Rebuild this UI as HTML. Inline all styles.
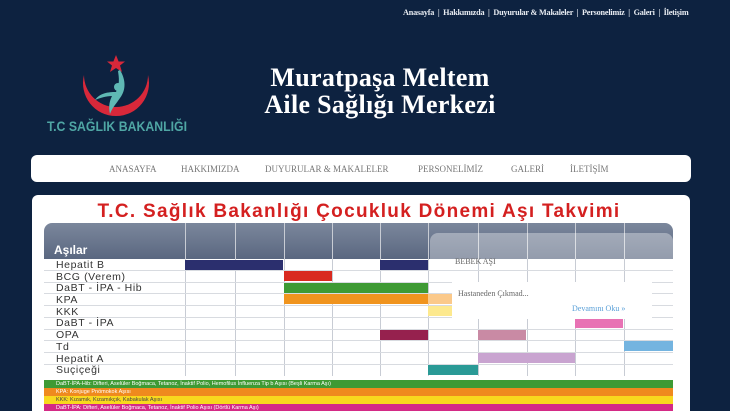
<!DOCTYPE html>
<html><head><meta charset="utf-8"><style>
*{margin:0;padding:0;box-sizing:border-box}
html,body{width:730px;height:411px;overflow:hidden}
body{background:#0d2240;font-family:"Liberation Sans",sans-serif;position:relative}
.top{position:absolute;top:8px;left:403px;width:287px;font-family:"Liberation Serif",serif;font-size:8.2px;color:#e8ecf2;white-space:nowrap;font-weight:bold;letter-spacing:-0.2px}
.title{position:absolute;left:230px;width:300px;top:64px;text-align:center;font-family:"Liberation Serif",serif;font-weight:bold;font-size:26px;line-height:27px;color:#fff;white-space:nowrap;letter-spacing:0.3px}
.nav{position:absolute;left:31px;top:155px;width:660px;height:27px;background:#fff;border-radius:6px;font-family:"Liberation Serif",serif;font-size:9px;color:#777}
.nav span{position:absolute;top:9px;white-space:nowrap}
.panel{position:absolute;left:32px;top:195px;width:658px;height:230px;background:#fff;border-radius:6px}
.h{position:absolute;left:44px;width:630px;top:201px;text-align:center;color:#d42020;font-weight:bold;font-size:19px;letter-spacing:1.3px;white-space:nowrap}
.thead{position:absolute;left:44px;top:223px;width:629px;height:36px;background:linear-gradient(#7b879c,#5a6780);border-radius:8px 8px 0 0}
.thead b{position:absolute;left:10px;bottom:2px;color:#fff;font-size:12px}
.vl{position:absolute;top:223px;width:1px;height:153px;background:#c8ccd4}
.row{position:absolute;left:44px;width:629px;height:1px;background:#d8dbe0}
.lbl{position:absolute;left:56px;font-size:10.5px;line-height:12px;color:#333;letter-spacing:0.6px}
.c{position:absolute;height:10px}
.lg{position:absolute;left:44px;width:629px;height:8px;font-size:5.5px;color:#fff;padding-left:12px;line-height:8px;white-space:nowrap;overflow:hidden}
</style></head><body>
<div class="top">Anasayfa &nbsp;| &nbsp;Hakkımızda &nbsp;| &nbsp;Duyurular &amp; Makaleler &nbsp;| &nbsp;Personelimiz &nbsp;| &nbsp;Galeri &nbsp;| &nbsp;İletişim</div>
<svg style="position:absolute;left:40px;top:52px" width="160" height="85" viewBox="0 0 160 85">
<polygon points="76,3 78.6,9.5 85,9.5 80,13.5 82,20 76,16 70,20 72,13.5 67,9.5 73.4,9.5" fill="#d8283a"/>
<path d="M44,23 A33,33 0 1 0 108,23 A31,31 0 0 1 44,23 Z" fill="#d8283a"/>
<circle cx="78" cy="35" r="4" fill="#5fb8b4"/>
<path d="M80,18 C86,28 86,38 80,46 C76,52 72,56 70,62 C68,54 70,48 72,44 C66,44 60,46 55,48 C60,41 68,40 76,40 C80,32 79,26 78,19 Z" fill="#5fb8b4"/>
<text x="7" y="79" font-family="Liberation Sans,sans-serif" font-weight="bold" font-size="14" fill="#4fa6a4" textLength="140" lengthAdjust="spacingAndGlyphs">T.C SAĞLIK BAKANLIĞI</text>
</svg>
<div class="title">Muratpaşa Meltem<br>Aile Sağlığı Merkezi</div>
<div class="nav"><span style="left:78px">ANASAYFA</span><span style="left:150px">HAKKIMIZDA</span><span style="left:234px">DUYURULAR &amp; MAKALELER</span><span style="left:387px">PERSONELİMİZ</span><span style="left:480px">GALERİ</span><span style="left:539px">İLETİŞİM</span></div>
<div class="panel"></div>
<div class="h">T.C. Sağlık Bakanlığı Çocukluk Dönemi Aşı Takvimi</div>
<div class="thead"><b>Aşılar</b></div>
<div class="vl" style="left:185px"></div><div class="vl" style="left:235px"></div><div class="vl" style="left:284px"></div><div class="vl" style="left:332px"></div><div class="vl" style="left:380px"></div><div class="vl" style="left:428px"></div><div class="vl" style="left:478px"></div><div class="vl" style="left:527px"></div><div class="vl" style="left:575px"></div><div class="vl" style="left:624px"></div>
<div class="row" style="top:270px"></div><div class="row" style="top:282px"></div><div class="row" style="top:293px"></div><div class="row" style="top:305px"></div><div class="row" style="top:317px"></div><div class="row" style="top:329px"></div><div class="row" style="top:340px"></div><div class="row" style="top:352px"></div><div class="row" style="top:364px"></div>
<div class="lbl" style="top:259px">Hepatit B</div>
<div class="lbl" style="top:271px">BCG (Verem)</div>
<div class="lbl" style="top:282px">DaBT - İPA - Hib</div>
<div class="lbl" style="top:294px">KPA</div>
<div class="lbl" style="top:306px">KKK</div>
<div class="lbl" style="top:317px">DaBT - İPA</div>
<div class="lbl" style="top:329px">OPA</div>
<div class="lbl" style="top:341px">Td</div>
<div class="lbl" style="top:353px">Hepatit A</div>
<div class="lbl" style="top:364px">Suçiçeği</div>
<div class="c" style="left:185px;top:260px;width:98px;background:#2b2f6e"></div>
<div class="c" style="left:380px;top:260px;width:48px;background:#2b2f6e"></div>
<div class="c" style="left:284px;top:271px;width:48px;background:#d92a20"></div>
<div class="c" style="left:284px;top:283px;width:144px;background:#3e9a34"></div>
<div class="c" style="left:284px;top:294px;width:144px;background:#f0941e"></div>
<div class="c" style="left:428px;top:294px;width:24px;background:#fbc98a"></div>
<div class="c" style="left:428px;top:306px;width:24px;background:#fde98e"></div>
<div class="c" style="left:575px;top:318px;width:48px;background:#e872b4"></div>
<div class="c" style="left:380px;top:330px;width:48px;background:#96214e"></div>
<div class="c" style="left:478px;top:330px;width:48px;background:#c98aa4"></div>
<div class="c" style="left:624px;top:341px;width:49px;background:#74b4e0"></div>
<div class="c" style="left:478px;top:353px;width:97px;background:#c9a4d0"></div>
<div class="c" style="left:428px;top:365px;width:50px;background:#2a9a96"></div>
<div style="position:absolute;left:430px;top:233px;width:243px;height:26px;background:rgba(255,255,255,0.35);border-radius:8px 8px 0 0"></div>
<div style="position:absolute;left:452px;top:282px;width:200px;height:37px;background:#fff"></div>
<div style="position:absolute;left:455px;top:257px;font-family:'Liberation Serif',serif;font-size:8px;color:#666">BEBEK AŞI</div>
<div style="position:absolute;left:458px;top:289px;font-family:'Liberation Serif',serif;font-size:8px;color:#666">Hastaneden Çıkmad...</div>
<div style="position:absolute;left:572px;top:304px;font-family:'Liberation Serif',serif;font-size:8px;color:#5aa0d8">Devamını Oku »</div>
<div class="lg" style="top:380px;background:#3e9a34">DaBT-İPA-Hib: Difteri, Aselüler Boğmaca, Tetanoz, İnaktif Polio, Hemofilus İnfluenza Tip b Aşısı (Beşli Karma Aşı)</div>
<div class="lg" style="top:388px;background:#ef8a1e">KPA: Konjuge Pnömokok Aşısı</div>
<div class="lg" style="top:396px;background:#f8d81e;color:#444">KKK: Kızamık, Kızamıkçık, Kabakulak Aşısı</div>
<div class="lg" style="top:404px;background:#d42a86">DaBT-İPA: Difteri, Aselüler Boğmaca, Tetanoz, İnaktif Polio Aşısı (Dörtlü Karma Aşı)</div>
</body></html>
